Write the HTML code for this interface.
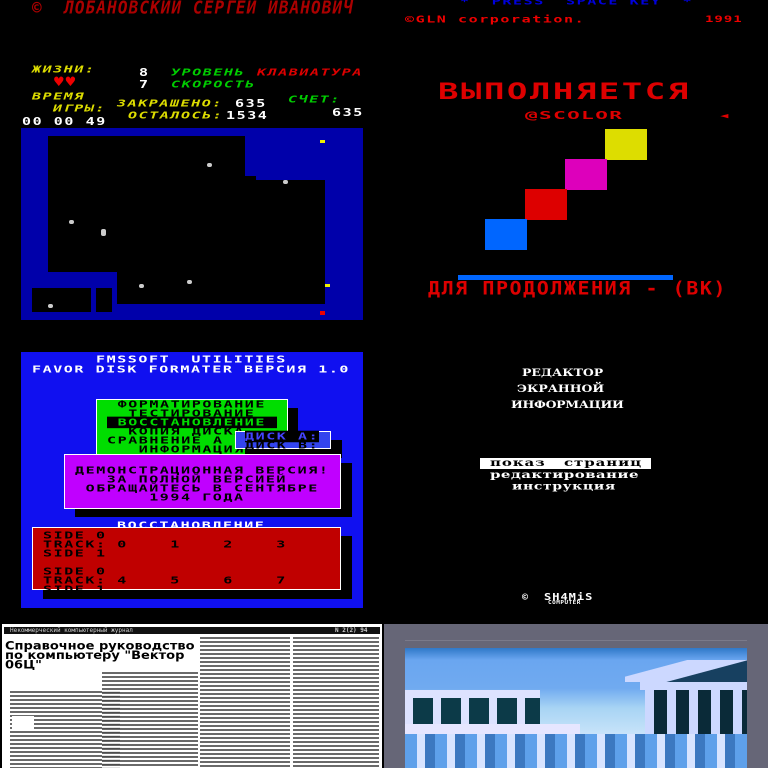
<!DOCTYPE html>
<html><head><meta charset="utf-8"><style>
*{margin:0;padding:0;box-sizing:border-box}
body{width:768px;height:768px;background:#000;position:relative;overflow:hidden;font-family:"DejaVu Sans Mono","Liberation Mono",monospace;font-weight:bold}
.a{position:absolute}
.p{position:absolute;white-space:pre;line-height:1;font-weight:bold;font-family:"DejaVu Sans Mono",monospace;font-size:15px;letter-spacing:1.57px;transform:scaleY(.64);transform-origin:0 0}
.it{font-style:italic}
.txt{background:repeating-linear-gradient(#fff 0 1px,#444 1px 3px,#fff 3px 4px)}
</style></head><body>

<!-- TOP LEFT -->
<div class="p it" style="left:32px;top:-1px;font-size:16px;letter-spacing:1.1px;color:#a00;transform:scaleY(1.1)">©  ЛОБАНОВСКИЙ СЕРГЕЙ ИВАНОВИЧ</div>
<div class="p it" style="left:32px;top:65px;color:#dd0">ЖИЗНИ:</div>
<div class="p" style="left:139px;top:67px;color:#fff;transform:scaleY(.73)">8</div>
<div class="p it" style="left:171px;top:68px;color:#0c0">УРОВЕНЬ</div>
<div class="p it" style="left:257px;top:68px;color:#d00">КЛАВИАТУРА</div>
<div class="a" style="left:53px;top:76px;font-size:13px;line-height:13px;color:#e00;letter-spacing:0;font-family:'DejaVu Sans',sans-serif">♥♥</div>
<div class="p" style="left:139px;top:79px;color:#fff;transform:scaleY(.73)">7</div>
<div class="p it" style="left:171px;top:80px;color:#0c0">СКОРОСТЬ</div>
<div class="p it" style="left:32px;top:92px;color:#dd0">ВРЕМЯ</div>
<div class="p it" style="left:53px;top:104px;color:#dd0">ИГРЫ:</div>
<div class="p it" style="left:117px;top:99px;color:#dd0">ЗАКРАШЕНО:</div>
<div class="p" style="left:235px;top:98px;color:#fff;transform:scaleY(.73)">635</div>
<div class="p it" style="left:288px;top:95px;color:#0c0">СЧЕТ:</div>
<div class="p" style="left:332px;top:107px;color:#fff;transform:scaleY(.73)">635</div>
<div class="p" style="left:22px;top:116px;color:#fff;transform:scaleY(.73)">00 00 49</div>
<div class="p it" style="left:128px;top:111px;color:#dd0">ОСТАЛОСЬ:</div>
<div class="p" style="left:226px;top:110px;color:#fff;transform:scaleY(.73)">1534</div>

<div class="a" style="left:21px;top:128px;width:342px;height:192px;background:#0000aa"></div>
<div class="a" style="left:48px;top:136px;width:197px;height:136px;background:#000"></div>
<div class="a" style="left:245px;top:176px;width:11px;height:96px;background:#000"></div>
<div class="a" style="left:256px;top:180px;width:69px;height:124px;background:#000"></div>
<div class="a" style="left:117px;top:272px;width:139px;height:32px;background:#000"></div>
<div class="a" style="left:32px;top:288px;width:59px;height:24px;background:#000"></div>
<div class="a" style="left:96px;top:288px;width:16px;height:24px;background:#000"></div>
<div class="a" style="left:207px;top:163px;width:5px;height:4px;background:#ccc;border-radius:2px"></div>
<div class="a" style="left:283px;top:180px;width:5px;height:4px;background:#ccc;border-radius:2px"></div>
<div class="a" style="left:69px;top:220px;width:5px;height:4px;background:#ccc;border-radius:2px"></div>
<div class="a" style="left:101px;top:229px;width:5px;height:7px;background:#ccc;border-radius:2px"></div>
<div class="a" style="left:139px;top:284px;width:5px;height:4px;background:#ccc;border-radius:2px"></div>
<div class="a" style="left:187px;top:280px;width:5px;height:4px;background:#ccc;border-radius:2px"></div>
<div class="a" style="left:48px;top:304px;width:5px;height:4px;background:#ccc;border-radius:2px"></div>
<div class="a" style="left:320px;top:140px;width:5px;height:3px;background:#ee0"></div>
<div class="a" style="left:325px;top:284px;width:5px;height:3px;background:#ee0"></div>
<div class="a" style="left:320px;top:311px;width:5px;height:4px;background:#e00"></div>

<!-- TOP RIGHT -->
<div class="p" style="left:460px;top:-3px;color:#00d">*  PRESS  SPACE KEY  *</div>
<div class="p" style="left:405px;top:15px;color:#e00">©GLN corporation.</div>
<div class="p" style="left:705px;top:15px;color:#e00;font-size:14px;letter-spacing:1px">1991</div>
<div class="p" style="left:438px;top:81px;font-size:34px;letter-spacing:2.5px;color:#d00;transform:scaleY(.65)">ВЫПОЛНЯЕТСЯ</div>
<div class="p" style="left:525px;top:110px;font-size:21px;letter-spacing:1.4px;color:#d00;transform:scaleY(.52)">@SCOLOR</div>
<div class="p" style="left:718px;top:110px;font-size:21px;color:#d00;transform:scaleY(.52)">◂</div>
<div class="a" style="left:605px;top:129px;width:42px;height:31px;background:#dd0"></div>
<div class="a" style="left:565px;top:159px;width:42px;height:31px;background:#d0b"></div>
<div class="a" style="left:525px;top:189px;width:42px;height:31px;background:#d00"></div>
<div class="a" style="left:485px;top:219px;width:42px;height:31px;background:#0066ff"></div>
<div class="a" style="left:458px;top:275px;width:215px;height:5px;background:#0066ff"></div>
<div class="p" style="left:428px;top:279px;font-size:20px;letter-spacing:1.55px;color:#d00;transform:scaleY(.92)">ДЛЯ ПРОДОЛЖЕНИЯ - (ВК)</div>

<!-- MID LEFT -->
<div class="a" style="left:21px;top:352px;width:342px;height:256px;background:#1010f0"></div>
<div class="p" style="left:96px;top:355px;color:#fff">FMSSOFT  UTILITIES</div>
<div class="p" style="left:32px;top:365px;color:#fff">FAVOR DISK FORMATER ВЕРСИЯ 1.0</div>
<div class="a" style="left:106px;top:408px;width:192px;height:56px;background:#000"></div>
<div class="a" style="left:96px;top:399px;width:192px;height:56px;background:#00dd00;border:1px solid #fff"></div>
<div class="p" style="left:107px;top:400px;color:#000;line-height:14px"> ФОРМАТИРОВАНИЕ
  ТЕСТИРОВАНИЕ
<span style="background:#000;color:#0d0"> ВОССТАНОВЛЕНИЕ </span>
  КОПИЯ ДИСКА
СРАВНЕНИЕ А
   ИНФОРМАЦИЯ</div>
<div class="a" style="left:245px;top:440px;width:97px;height:18px;background:#000"></div>
<div class="a" style="left:235px;top:431px;width:96px;height:18px;background:#3344ee;border:1px solid #fff"></div>
<div class="p" style="left:245px;top:432px;color:#000;line-height:14px"><span style="background:#000;color:#44f">ДИСК А:</span>
ДИСК В:</div>
<div class="a" style="left:75px;top:463px;width:277px;height:54px;background:#000"></div>
<div class="a" style="left:64px;top:454px;width:277px;height:55px;background:#c000ff;border:1px solid #fff"></div>
<div class="p" style="left:75px;top:466px;color:#000;line-height:14px">ДЕМОНСТРАЦИОННАЯ ВЕРСИЯ!
   ЗА ПОЛНОЙ ВЕРСИЕЙ
 ОБРАЩАЙТЕСЬ В СЕНТЯБРЕ
       1994 ГОДА</div>
<div class="p" style="left:117px;top:521px;color:#fff">ВОССТАНОВЛЕНИЕ</div>
<div class="a" style="left:43px;top:536px;width:309px;height:63px;background:#000"></div>
<div class="a" style="left:32px;top:527px;width:309px;height:63px;background:#c00000;border:1px solid #fff"></div>
<div class="p" style="left:43px;top:531px;color:#000;line-height:14px">SIDE 0
TRACK: 0    1    2    3
SIDE 1

SIDE 0
TRACK: 4    5    6    7
SIDE 1</div>

<!-- MID RIGHT -->
<div class="p" style="left:522px;top:368px;color:#fff;font-family:'DejaVu Serif',serif;font-size:12.5px;letter-spacing:0;transform:scaleY(.8)">РЕДАКТОР</div>
<div class="p" style="left:517px;top:384px;color:#fff;font-family:'DejaVu Serif',serif;font-size:12.5px;letter-spacing:0;transform:scaleY(.8)">ЭКРАННОЙ</div>
<div class="p" style="left:511px;top:400px;color:#fff;font-family:'DejaVu Serif',serif;font-size:12.5px;letter-spacing:-0.3px;transform:scaleY(.8)">ИНФОРМАЦИИ</div>
<div class="a" style="left:480px;top:458px;width:171px;height:11px;background:#fff"></div>
<div class="p" style="left:490px;top:458px;color:#000;font-family:'DejaVu Serif',serif;font-size:15px;letter-spacing:0.9px;transform:scaleY(.66)">показ   страниц</div>
<div class="p" style="left:490px;top:470px;color:#fff;font-family:'DejaVu Serif',serif;font-size:15px;letter-spacing:0.4px;transform:scaleY(.66)">редактирование</div>
<div class="p" style="left:512px;top:482px;color:#fff;font-family:'DejaVu Serif',serif;font-size:14px;letter-spacing:0.6px;transform:scaleY(.7)">инструкция</div>
<div class="a" style="left:522px;top:592px;font-size:10px;color:#fff">©</div>
<div class="p" style="left:544px;top:592px;color:#fff;font-size:12px;letter-spacing:1px;transform:scaleY(.8)">SH4MiS</div>
<div class="p" style="left:548px;top:601px;font-size:6px;letter-spacing:.5px;color:#fff;transform:scaleY(.8)">COMPUTER</div>

<!-- BOTTOM LEFT -->
<div class="a" style="left:2px;top:624px;width:380px;height:144px;background:#fff"></div>
<div class="a" style="left:4px;top:627px;width:376px;height:7px;background:#111"></div>
<div class="a" style="left:10px;top:627px;font-size:6px;line-height:7px;color:#ccc;font-weight:normal;white-space:pre">Некоммерческий компьютерный журнал</div>
<div class="a" style="left:335px;top:627px;font-size:6px;line-height:7px;color:#ccc;white-space:pre">N 2(2) 94</div>
<div class="a" style="left:5px;top:642px;font-size:13px;color:#000;font-family:'DejaVu Sans',sans-serif;font-weight:bold;line-height:11px;white-space:pre;transform:scaleY(.85);transform-origin:0 0">Справочное руководство
по компьютеру "Вектор
06Ц"</div>
<div class="a txt" style="left:10px;top:690px;width:110px;height:78px;opacity:.8"></div>
<div class="a txt" style="left:102px;top:671px;width:96px;height:97px;opacity:.8"></div>
<div class="a txt" style="left:200px;top:636px;width:90px;height:132px;opacity:.8"></div>
<div class="a txt" style="left:293px;top:636px;width:86px;height:132px;opacity:.8"></div>
<div class="a" style="left:10px;top:676px;width:88px;height:12px;background:#fff"></div>
<div class="a" style="left:12px;top:716px;width:22px;height:14px;background:#fff"></div>
<div class="a" style="left:10px;top:670px;width:90px;height:6px;background:#fff"></div>

<!-- BOTTOM RIGHT -->
<div class="a" style="left:384px;top:624px;width:384px;height:144px;background:#666677"></div>
<div class="a" style="left:405px;top:640px;width:342px;height:1px;background:#7a7a8a"></div>
<div class="a" style="left:405px;top:648px;width:342px;height:120px;background:linear-gradient(#2f78c8 0,#6aa6f0 12px,#70aaf0 40px,#a8d4f4 60px,#c0e0f8 80px,#dde8ff 100px,#7fb8ee 110px,#9fd0f8 120px)"></div>
<div class="a" style="left:405px;top:690px;width:135px;height:8px;background:#dde2ff"></div>
<div class="a" style="left:405px;top:698px;width:135px;height:28px;background:repeating-linear-gradient(90deg,#dde2ff 0 8px,#0c3a48 8px 28px)"></div>
<div class="a" style="left:405px;top:724px;width:175px;height:10px;background:#e6e6ff"></div>
<div class="a" style="left:405px;top:734px;width:342px;height:34px;background:repeating-linear-gradient(90deg,#5ea0ea 0 12px,#d8e4ff 12px 20px,#3c78c0 20px 30px)"></div>
<div class="a" style="left:645px;top:690px;width:102px;height:44px;background:repeating-linear-gradient(90deg,#ccd8ff 0 9px,#0a2a38 9px 22px)"></div>
<div class="a" style="left:640px;top:682px;width:107px;height:8px;background:#ccd8ff"></div>
<div class="a" style="left:625px;top:660px;width:122px;height:22px;background:linear-gradient(165deg,transparent 30%,#ccd8ff 31%,#ccd8ff 60%,#174060 61%)"></div>
</body></html>
